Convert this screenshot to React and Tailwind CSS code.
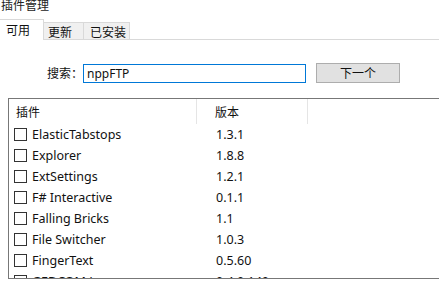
const font = { fontFamily: '"Segoe UI", "Noto Sans", "Noto Sans CJK SC", sans-serif' };
const cjk = { fontFamily: '"Noto Sans CJK SC", sans-serif' };

const rows = [
  ["ElasticTabstops", "1.3.1"],
  ["Explorer", "1.8.8"],
  ["ExtSettings", "1.2.1"],
  ["F# Interactive", "0.1.1"],
  ["Falling Bricks", "1.1"],
  ["File Switcher", "1.0.3"],
  ["FingerText", "0.5.60"],
  ["GEDCOM Lexer", "0.4.0.140"],
];

export default function App() {
  return (
    <div className="w-[439px] h-[293px] bg-white overflow-hidden text-[12px] text-[#111] relative" style={font}>
      <div className="h-[19px] -mt-[3px] pl-[1px] leading-[16px] text-[#222]" style={cjk}>插件管理</div>
      <div className="flex items-end h-[21px] border-b border-[#d9d9d9] mt-[3px]" style={cjk}>
        <div className="w-[44px] h-[21px] -mb-[1px] bg-white border-r border-t border-[#d9d9d9] pl-[6px] leading-[20px] text-[12px]">可用</div>
        <div className="w-[40px] h-[17px] bg-[#f0f0f0] border-r border-t border-[#d9d9d9] pl-[4px] leading-[17px]">更新</div>
        <div className="w-[46px] h-[17px] bg-[#f0f0f0] border-r border-t border-[#d9d9d9] pl-[6px] leading-[17px]">已安装</div>
      </div>
      <div className="flex items-center mt-[23px] h-[20px]">
        <div className="ml-[47px] w-[36px] leading-[16px]" style={cjk}>搜索：</div>
        <div className="w-[223px] h-[19px] border border-[#0078d7] pl-[3px] leading-[17px]">nppFTP</div>
        <div className="ml-[10px] w-[84px] h-[20px] bg-[#e1e1e1] border border-[#adadad] flex items-center justify-center leading-[16px]" style={cjk}>下一个</div>
      </div>
      <div className="ml-[8px] mt-[15px] h-[181px] border-l border-t border-b border-[#777] overflow-hidden">
        <div className="flex h-[25px] items-center">
          <div className="w-[188px] h-full pl-[7px] flex items-center border-r border-[#e5e5e5]" style={cjk}>插件</div>
          <div className="w-[111px] h-full pl-[18px] flex items-center border-r border-[#e5e5e5]" style={cjk}>版本</div>
        </div>
        {rows.map(([n, v]) => (
          <div key={n} className="flex h-[21px] items-center text-[12.5px]">
            <div className="w-[189px] flex items-center pl-[5px]">
              <div className="w-[13px] h-[13px] border border-[#333] bg-white"></div>
              <div className="ml-[5px] leading-[16px]">{n}</div>
            </div>
            <div className="pl-[18px] leading-[16px]">{v}</div>
          </div>
        ))}
      </div>
    </div>
  );
}
